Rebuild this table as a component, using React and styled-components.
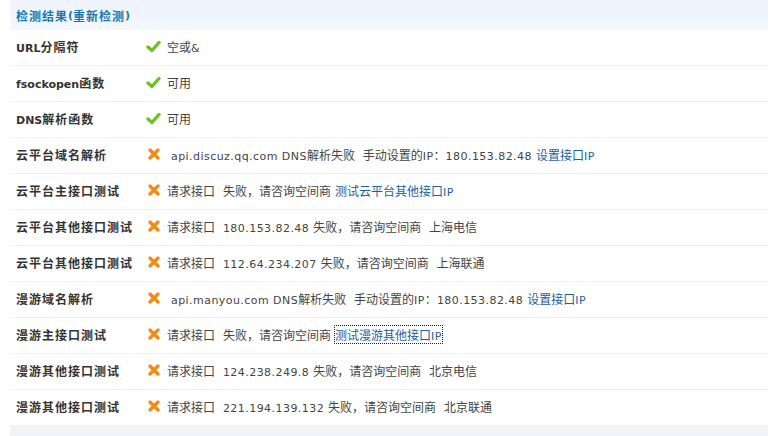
import React from "react";
import styled, { createGlobalStyle } from "styled-components";

const Global = createGlobalStyle`
  html, body { margin: 0; padding: 0; background: #fff; }
  body { font-family: "Noto Sans CJK SC", "DejaVu Sans", sans-serif; font-size: 12px; color: #333; }
`;

const Wrap = styled.div`
  margin-left: 10px;
  width: 758px;
`;

const Header = styled.div`
  height: 30px;
  display: flex;
  align-items: center;
  padding-left: 6px;
  background: linear-gradient(#eef3fd, #f3f8fd);
  font-weight: bold;
  color: #1779b0;
  font-size: 12px;
  letter-spacing: 1px;
`;

const Row = styled.div`
  height: 35px;
  display: grid;
  grid-template-columns: 130px 1fr;
  align-items: center;
  padding-left: 6px;
  border-bottom: 1px solid #eef0f3;
`;

const Label = styled.div`
  font-weight: bold;
  color: #333;
  margin-top: -3px;
  letter-spacing: 1px;
`;

const Value = styled.div`
  display: flex;
  align-items: center;
  gap: 6px;
  color: #444;
  margin-top: -3px;
`;

const Latin = styled.span`
  font-family: "DejaVu Sans", "Liberation Sans", sans-serif;
  font-size: 11px;
  letter-spacing: ${(p) => (p.$bold ? "0" : "0.45px")};
`;

const Link = styled.a`
  color: #22609e;
  text-decoration: none;
  margin-left: 4px;
  outline: ${(p) => (p.$focused ? "1px dotted #222" : "none")};
`;

const Footer = styled.div`
  height: 10px;
  background: #f0f4f9;
`;

const IconBox = styled.span`
  display: inline-flex;
  width: 15px;
  justify-content: center;
`;

const Text = styled.span`
  white-space: pre;
`;

const Check = () => (
  <IconBox>
    <svg width="15" height="13" viewBox="0 0 15 13">
      <path d="M2 7 L6 10.5 L13 2.5" fill="none" stroke="#6cc31f" strokeWidth="3.4" strokeLinecap="round" strokeLinejoin="round" />
    </svg>
  </IconBox>
);

const Cross = () => (
  <IconBox>
    <svg width="12" height="12" viewBox="0 0 12 12">
      <path d="M2 2 L10 10 M10 2 L2 10" stroke="#f5880e" strokeWidth="3.2" strokeLinecap="round" />
    </svg>
  </IconBox>
);

const Mixed = ({ children, bold }) =>
  String(children)
    .split(/([\x20-\x7E]+)/)
    .filter(Boolean)
    .map((s, i) =>
      /^[\x20-\x7E]+$/.test(s) ? (
        <Latin key={i} $bold={bold}>{s}</Latin>
      ) : (
        <React.Fragment key={i}>{s}</React.Fragment>
      )
    );

const rows = [
  { label: "URL分隔符", ok: true, text: "空或&" },
  { label: "fsockopen函数", ok: true, text: "可用" },
  { label: "DNS解析函数", ok: true, text: "可用" },
  { label: "云平台域名解析", ok: false, text: " api.discuz.qq.com DNS解析失败  手动设置的IP：180.153.82.48", link: "设置接口IP" },
  { label: "云平台主接口测试", ok: false, text: "请求接口  失败，请咨询空间商", link: "测试云平台其他接口IP" },
  { label: "云平台其他接口测试", ok: false, text: "请求接口  180.153.82.48 失败，请咨询空间商  上海电信" },
  { label: "云平台其他接口测试", ok: false, text: "请求接口  112.64.234.207 失败，请咨询空间商  上海联通" },
  { label: "漫游域名解析", ok: false, text: " api.manyou.com DNS解析失败  手动设置的IP：180.153.82.48", link: "设置接口IP" },
  { label: "漫游主接口测试", ok: false, text: "请求接口  失败，请咨询空间商", link: "测试漫游其他接口IP", focused: true },
  { label: "漫游其他接口测试", ok: false, text: "请求接口  124.238.249.8 失败，请咨询空间商  北京电信" },
  { label: "漫游其他接口测试", ok: false, text: "请求接口  221.194.139.132 失败，请咨询空间商  北京联通" },
];

export default function App() {
  return (
    <>
      <Global />
      <Wrap>
        <Header>
          <Mixed bold>检测结果(重新检测)</Mixed>
        </Header>
        {rows.map((r, i) => (
          <Row key={i}>
            <Label>
              <Mixed bold>{r.label}</Mixed>
            </Label>
            <Value>
              {r.ok ? <Check /> : <Cross />}
              <span>
                <Text>
                  <Mixed>{r.text}</Mixed>
                </Text>
                {r.link && (
                  <Link href="#" $focused={r.focused}>
                    <Mixed>{r.link}</Mixed>
                  </Link>
                )}
              </span>
            </Value>
          </Row>
        ))}
        <Footer />
      </Wrap>
    </>
  );
}
